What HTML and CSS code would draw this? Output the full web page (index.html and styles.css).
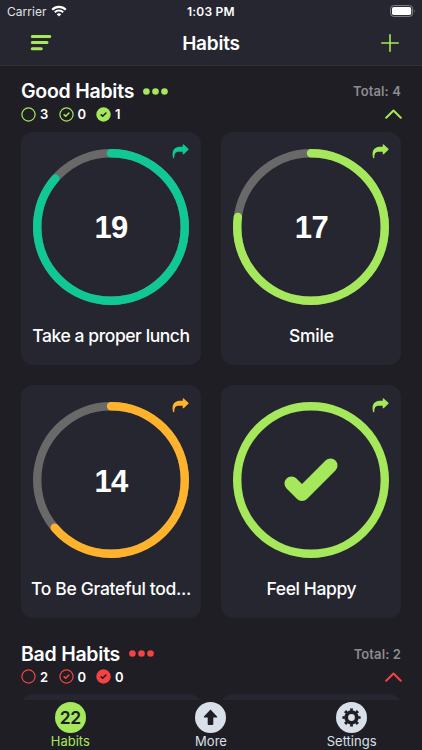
FILE: index.html
```html
<!DOCTYPE html>
<html lang="en">
<head>
<meta charset="utf-8">
<title>Habits</title>
<link rel="stylesheet" href="styles.css">
</head>
<body>
<svg class="defs" width="0" height="0">
  <symbol id="share" viewBox="0 0 17 15"><path d="M1.100 14C-.5 8.300 1.300 3.100 7.500 2.800H10.700V.7Q10.900-.1 11.700.4L16.400 4.700Q16.900 5.200 16.400 5.700L12 10.100Q10.900 10.700 10.700 9.900V7.700H7.300C3.500 7.700 2.300 9.300 2.300 13.700Q1.800 14.800 1.100 14Z" fill="currentColor"/></symbol>
  <symbol id="open" viewBox="0 0 15 15"><circle cx="7.500" cy="7.500" r="6.600" fill="none" stroke="currentColor" stroke-width="1.200"/></symbol>
  <symbol id="partial" viewBox="0 0 15 15"><circle cx="7.500" cy="7.500" r="6.600" fill="none" stroke="currentColor" stroke-width="1.200"/><path d="M5.200 7.800l1.500 1.400 3.200-3.200" fill="none" stroke="currentColor" stroke-width="1.600" stroke-linecap="round" stroke-linejoin="round"/></symbol>
  <symbol id="done" viewBox="0 0 15 15"><circle cx="7.500" cy="7.500" r="7.200" fill="currentColor"/><path d="M5.200 7.800l1.500 1.400 3.200-3.200" fill="none" stroke="#1f1e25" stroke-width="1.600" stroke-linecap="round" stroke-linejoin="round"/></symbol>
  <symbol id="dots" viewBox="0 0 25 7"><circle cx="3.400" cy="3.500" r="3.300" fill="currentColor"/><circle cx="12.500" cy="3.500" r="3.300" fill="currentColor"/><circle cx="21.500" cy="3.500" r="3.300" fill="currentColor"/></symbol>
  <symbol id="chevron" viewBox="0 0 17 10"><path d="M1.200 8.800L8.500 1.500l7.300 7.300" fill="none" stroke="currentColor" stroke-width="2" stroke-linecap="round" stroke-linejoin="round"/></symbol>
</svg>
<header class="top">
  <div class="status">
    <span class="carrier">Carrier</span>
    <svg class="wifi" width="16" height="12" viewBox="0 0 16 12"><g fill="none" stroke="#fff" stroke-width="2.100"><path d="M1.200 4.700a9.600 9.600 0 0 1 13.600 0"/><path d="M3.800 7.200a6 6 0 0 1 8.400 0"/></g><path d="M5.700 9.300a3.300 3.300 0 0 1 4.600 0L8 11.600z" fill="#fff"/></svg>
    <span class="time">1:03 PM</span>
    <svg class="battery" width="26" height="12" viewBox="0 0 26 12"><rect x=".6" y=".6" width="22" height="10.800" rx="3" fill="none" stroke="#85848b"/><rect x="2" y="2" width="19.200" height="8" rx="1.700" fill="#fff"/><path d="M24 4.200q1.500 1.800 0 3.600z" fill="#85848b"/></svg>
  </div>
  <nav class="bar">
    <svg width="22" height="18" viewBox="0 0 22 18" fill="none" stroke="#a6e85b" stroke-width="3" stroke-linecap="round"><path d="M2.300 2.500h17.500M2.300 8.600h14.700M2.300 14.700h9"/></svg>
    <h1>Habits</h1>
    <svg width="18" height="18" viewBox="0 0 18 18" fill="none" stroke="#a6e85b" stroke-width="1.600" stroke-linecap="round"><path d="M9 .8v16.400M.8 9h16.400"/></svg>
  </nav>
</header>

<main>
  <section class="group green">
    <div class="heading"><h2 class="good">Good Habits</h2><svg class="dots" width="25" height="7"><use href="#dots"/></svg><span class="total">Total: 4</span></div>
    <div class="counts">
      <svg width="15" height="15"><use href="#open"/></svg><b>3</b>
      <svg width="15" height="15"><use href="#partial"/></svg><b>0</b>
      <svg width="15" height="15"><use href="#done"/></svg><b>1</b>
      <svg class="chevron" width="17" height="10"><use href="#chevron"/></svg>
    </div>
    <div class="grid">
      <article class="card teal">
        <div class="dial">
          <svg class="ring" viewBox="0 0 156 156"><circle class="track" cx="78" cy="78" r="73.800"/><circle class="value" cx="78" cy="78" r="73.800" pathLength="100" stroke-dasharray="86.400 100"/></svg>
          <span class="number">19</span>
        </div>
        <svg class="share" width="17" height="15"><use href="#share"/></svg>
        <h3 class="lunch">Take a proper lunch</h3>
      </article>
      <article class="card green">
        <div class="dial">
          <svg class="ring" viewBox="0 0 156 156"><circle class="track" cx="78" cy="78" r="73.800"/><circle class="value" cx="78" cy="78" r="73.800" pathLength="100" stroke-dasharray="77.200 100"/></svg>
          <span class="number">17</span>
        </div>
        <svg class="share" width="17" height="15"><use href="#share"/></svg>
        <h3 class="smile">Smile</h3>
      </article>
      <article class="card orange">
        <div class="dial">
          <svg class="ring" viewBox="0 0 156 156"><circle class="track" cx="78" cy="78" r="73.800"/><circle class="value" cx="78" cy="78" r="73.800" pathLength="100" stroke-dasharray="63.800 100"/></svg>
          <span class="number">14</span>
        </div>
        <svg class="share" width="17" height="15"><use href="#share"/></svg>
        <h3 class="grateful">To Be Grateful tod...</h3>
      </article>
      <article class="card green">
        <div class="dial">
          <svg class="ring" viewBox="0 0 156 156"><circle class="value" cx="78" cy="78" r="73.800"/></svg>
          <svg class="check" width="54" height="44" viewBox="0 0 54 44"><path d="M7.500 25.500L18 36 46.500 7.500" fill="none" stroke="currentColor" stroke-width="14" stroke-linecap="round" stroke-linejoin="round"/></svg>
        </div>
        <svg class="share" width="17" height="15"><use href="#share"/></svg>
        <h3 class="happy">Feel Happy</h3>
      </article>
    </div>
  </section>

  <section class="group red">
    <div class="heading"><h2 class="bad">Bad Habits</h2><svg class="dots" width="25" height="7"><use href="#dots"/></svg><span class="total">Total: 2</span></div>
    <div class="counts">
      <svg width="15" height="15"><use href="#open"/></svg><b>2</b>
      <svg width="15" height="15"><use href="#partial"/></svg><b>0</b>
      <svg width="15" height="15"><use href="#done"/></svg><b>0</b>
      <svg class="chevron" width="17" height="10"><use href="#chevron"/></svg>
    </div>
    <div class="grid"><article class="card"></article><article class="card"></article></div>
  </section>
</main>

<footer class="tabs">
  <div class="tab active"><span class="disc">22</span><span class="label">Habits</span></div>
  <div class="tab"><span class="disc"><svg width="31" height="31" viewBox="0 0 31 31"><path d="M15.500 7.600l6.600 6.900q.5.900-.6.900h-3.200v6.600q0 1-1 1h-3.600q-1 0-1-1v-6.600H9.500q-1.100 0-.6-.9z" fill="#1f1e25"/></svg></span><span class="label">More</span></div>
  <div class="tab"><span class="disc"><svg width="31" height="31" viewBox="0 0 31 31" fill="none" stroke="#1f1e25"><circle cx="15.500" cy="15.500" r="5.300" stroke-width="3.800"/><circle cx="15.500" cy="15.500" r="7.700" stroke-width="2.800" pathLength="80" stroke-dasharray="4.600 5.400" stroke-dashoffset="2.300"/></svg></span><span class="label">Settings</span></div>
</footer>
</body>
</html>
```
FILE: styles.css
```css
* { box-sizing: border-box; margin: 0; }
body {
  width: 422px;
  height: 750px;
  overflow: hidden;
  display: flex;
  flex-direction: column;
  background: #1f1e25;
  color: #fff;
  font-family: Inter, "Liberation Sans", sans-serif;
}
svg { display: block; flex: none; }
.defs { position: absolute; }
h1, h2, h3, .total, .label, .carrier, .time { white-space: nowrap; }

.top { flex: none; height: 66px; background: #262630; border-bottom: 1px solid #303037; }
.status { display: flex; align-items: center; height: 22px; padding: 0 6px 0 7px; font-size: 12px; }
.carrier { width: 44px; letter-spacing: .05px; color: #e3e3e6; }
.time { width: 50px; margin-left: 120px; font-weight: 600; letter-spacing: .2px; }
.battery { margin-left: auto; }
.bar { display: grid; grid-template-columns: 60px 1fr 60px; align-items: center; height: 42px; padding: 0; }
.bar > svg:first-child { margin-left: 30px; }
.bar > svg:last-child { margin-left: 18.500px; }
h1 { font-size: 19px; font-weight: 600; letter-spacing: -.2px; text-align: center; }

main { flex: 1; min-height: 0; overflow: hidden; padding: 13px 20.500px 0 21px; }
.heading { display: flex; align-items: center; height: 24px; }
h2 { font-size: 19.500px; font-weight: 600; line-height: 24px; letter-spacing: -.25px; }
.dots { margin-left: 9px; }
.total { margin-left: auto; margin-right: .5px; font-size: 13px; font-weight: 600; letter-spacing: .1px; color: #8c8b92; }
.counts { display: flex; align-items: center; height: 22px; }
.counts b { width: 22.500px; padding-left: 4px; font-size: 13px; font-weight: 600; }
.chevron { margin-left: auto; }
.grid { display: grid; grid-template-columns: 180px 180px; column-gap: 20.400px; row-gap: 20.500px; margin-top: 6.500px; }
.card { position: relative; height: 233px; padding-top: 17px; border-radius: 12px; background: #262630; }
.dial { display: grid; place-items: center; width: 156px; height: 156px; margin: 0 auto; }
.dial > * { grid-area: 1 / 1; }
.ring { width: 156px; height: 156px; transform: rotate(-90deg); }
.ring circle { fill: none; stroke-width: 8.400; }
.track { stroke: #69696a; }
.value { stroke: currentColor; stroke-linecap: round; }
.number { color: #fff; font: bold 31px/36px "Liberation Sans", sans-serif; letter-spacing: -.7px; padding-top: 3px; }
.share { position: absolute; right: 12px; top: 12.500px; }
h3 { margin-top: 19px; color: #fff; font-size: 17.500px; font-weight: 500; line-height: 24px; text-align: center; }
.lunch { letter-spacing: -.43px; }
.smile { letter-spacing: -.2px; }
.grateful { letter-spacing: -.33px; }
.happy { letter-spacing: -.38px; }
.group + .group { margin-top: 23.500px; }
.green { color: #a6e85b; }
.teal { color: #10c896; }
.orange { color: #ffb32c; }
.red { color: #f54343; }
h2, .counts b { color: #fff; }

.tabs { flex: none; display: grid; grid-template-columns: repeat(3, 1fr); height: 50px; background: #1f1e25; }
.tab { display: flex; flex-direction: column; align-items: center; padding-top: 2px; color: #d9e0e9; }
.disc { display: grid; place-items: center; width: 31px; height: 31px; border-radius: 50%; background: #d9e0e9; color: #1f1e25; font-size: 17.500px; font-weight: 600; letter-spacing: -.4px; }
.label { font-size: 13px; line-height: 16px; }
.active { color: #a6e85b; }
.active .disc { background: #a6e85b; }
```
